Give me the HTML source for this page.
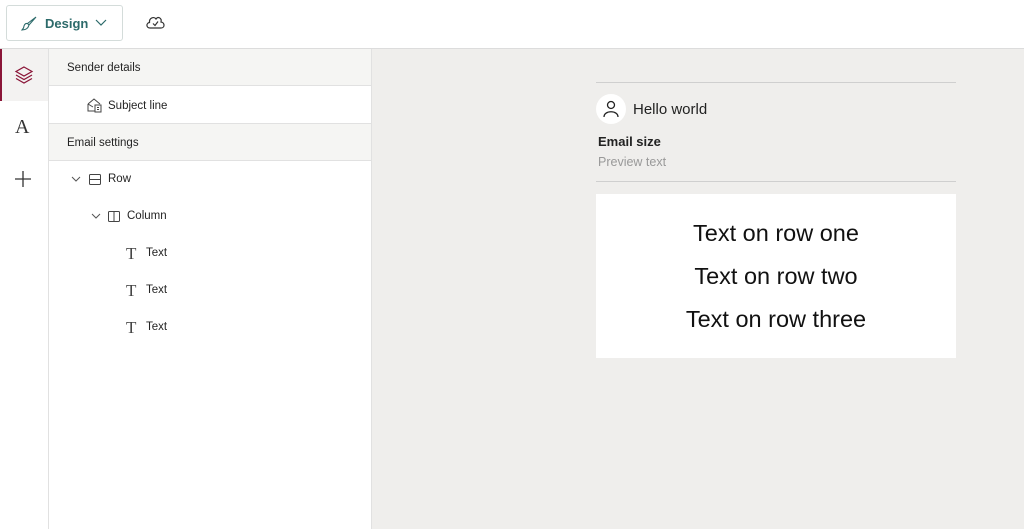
<!DOCTYPE html>
<html><head><style>
*{margin:0;padding:0;box-sizing:border-box}
body{width:1024px;height:529px;overflow:hidden;font-family:"Liberation Sans",sans-serif;background:#fff;position:relative;color:#242424}
.top{position:absolute;left:0;top:0;width:1024px;height:49px;border-bottom:1px solid #dcdcdc;background:#fff}
.btn{position:absolute;left:6px;top:5px;width:117px;height:36px;border:1px solid #d4dcda;border-radius:3px}
.btn span{position:absolute;left:38px;top:10px;font-size:13px;font-weight:bold;color:#2c6a6a}
.rail{position:absolute;left:0;top:49px;width:49px;height:480px;border-right:1px solid #e1e1e1}
.act{position:absolute;left:0;top:0;width:48px;height:52px;background:#f3f2f1;border-left:2px solid #8a1538}
.panel{position:absolute;left:49px;top:49px;width:323px;height:480px;border-right:1px solid #e1e1e1}
.row{position:absolute;left:0;width:322px;height:37px;font-size:11.5px;line-height:39px}
.g{background:#f5f5f3;border-bottom:1px solid #e1e1e1}
.canvas{position:absolute;left:372px;top:49px;width:652px;height:480px;background:#efeeec}
.hr{position:absolute;left:224px;width:360px;height:1px;background:#cfcfcf}
.card{position:absolute;left:224px;top:145px;width:360px;height:164px;background:#fff;text-align:center;font-size:23.5px;color:#111}
.card div{position:absolute;left:0;width:100%}
</style></head><body>
<div class="top">
 <div class="btn">
  <svg style="position:absolute;left:13px;top:9px" width="18" height="18" viewBox="0 0 18 18" fill="none" stroke="#2c6a6a" stroke-width="1.1"><path d="M16 2 L9 10 L7.5 8.5 Z M7.5 8.5 C5 8 4 10 3.5 13 L2 15 C5 15 8 14 9 10"/></svg>
  <span>Design</span>
  <svg style="position:absolute;left:88px;top:13px" width="12" height="8" viewBox="0 0 12 8" fill="none" stroke="#2c6a6a" stroke-width="1.2"><path d="M1 1 L6 6 L11 1"/></svg>
 </div>
 <svg style="position:absolute;left:145px;top:13px" width="21" height="18" viewBox="0 0 21 18" fill="none" stroke="#333" stroke-width="1.2"><path d="M5 15 C1 15 1 10 4.5 9.5 C4 5 9 3 11 6 C13 3 17 5 16 9 C20 9.5 20 15 16 15 Z"/><path d="M8 10.5 L10 12.5 L13 8.5"/></svg>
</div>
<div class="rail">
 <div class="act"></div>
 <svg style="position:absolute;left:14px;top:16px" width="20" height="20" viewBox="0 0 20 20" fill="none" stroke="#8a1538" stroke-width="1.2"><path d="M10 2 L18 6.5 L10 11 L2 6.5 Z M2 10 L10 14.5 L18 10 M2 13.5 L10 18 L18 13.5"/></svg>
 <div style="position:absolute;left:15px;top:67px;font-size:20px;font-family:'Liberation Serif',serif;color:#333">A</div>
 <svg style="position:absolute;left:14px;top:121px" width="18" height="18" viewBox="0 0 18 18" stroke="#333" stroke-width="1.3"><path d="M9 1 V17 M1 9 H17"/></svg>
</div>
<div class="panel">
 <div class="row g" style="top:0;padding-left:18px">Sender details</div>
 <div class="row" style="top:38px;padding-left:59px;border-bottom:1px solid #e1e1e1">
  <svg style="position:absolute;left:38px;top:11px" width="16" height="15" viewBox="0 0 16 15" fill="none" stroke="#444" stroke-width="1"><path d="M1 6 L7 1 L13 6 M1 6 V13 H8 M1 6 L6 9 M8 7 H14 V14 H8 Z M10 9.5 H12 M10 11.5 H12"/></svg>Subject line</div>
 <div class="row g" style="top:75px;padding-left:18px">Email settings</div>
 <div class="row" style="top:111px;padding-left:59px">
  <svg style="position:absolute;left:22px;top:16px" width="10" height="7" viewBox="0 0 10 7" fill="none" stroke="#555"><path d="M1 1 L5 5 L9 1"/></svg>
  <svg style="position:absolute;left:40px;top:14px" width="12" height="11" viewBox="0 0 12 11" fill="none" stroke="#444"><rect x="0.5" y="0.5" width="11" height="10" rx="1"/><path d="M0.5 5.5 H11.5"/></svg>Row</div>
 <div class="row" style="top:148px;padding-left:78px">
  <svg style="position:absolute;left:42px;top:16px" width="10" height="7" viewBox="0 0 10 7" fill="none" stroke="#555"><path d="M1 1 L5 5 L9 1"/></svg>
  <svg style="position:absolute;left:59px;top:14px" width="12" height="11" viewBox="0 0 12 11" fill="none" stroke="#444"><rect x="0.5" y="0.5" width="11" height="10" rx="1"/><path d="M6 0.5 V10.5"/></svg>Column</div>
 <div class="row" style="top:185px;padding-left:97px"><span style="position:absolute;left:77px;font-family:'Liberation Serif',serif;font-size:17px;color:#444">T</span>Text</div>
 <div class="row" style="top:222px;padding-left:97px"><span style="position:absolute;left:77px;font-family:'Liberation Serif',serif;font-size:17px;color:#444">T</span>Text</div>
 <div class="row" style="top:259px;padding-left:97px"><span style="position:absolute;left:77px;font-family:'Liberation Serif',serif;font-size:17px;color:#444">T</span>Text</div>
</div>
<div class="canvas">
 <div class="hr" style="top:33px"></div>
 <div style="position:absolute;left:224px;top:45px;width:30px;height:30px;border-radius:50%;background:#fff"></div>
 <svg style="position:absolute;left:230px;top:50px" width="18" height="20" viewBox="0 0 18 20" fill="none" stroke="#222" stroke-width="1.3"><circle cx="9" cy="6" r="3.5"/><path d="M2 18 C2 11 16 11 16 18"/></svg>
 <div style="position:absolute;left:261px;top:52px;font-size:15px;color:#222">Hello world</div>
 <div style="position:absolute;left:226px;top:85px;font-size:13px;font-weight:bold;color:#222">Email size</div>
 <div style="position:absolute;left:226px;top:106px;font-size:12.5px;color:#999">Preview text</div>
 <div class="hr" style="top:132px"></div>
 <div class="card">
  <div style="top:26px">Text on row one</div>
  <div style="top:69px">Text on row two</div>
  <div style="top:112px">Text on row three</div>
 </div>
</div>
</body></html>
